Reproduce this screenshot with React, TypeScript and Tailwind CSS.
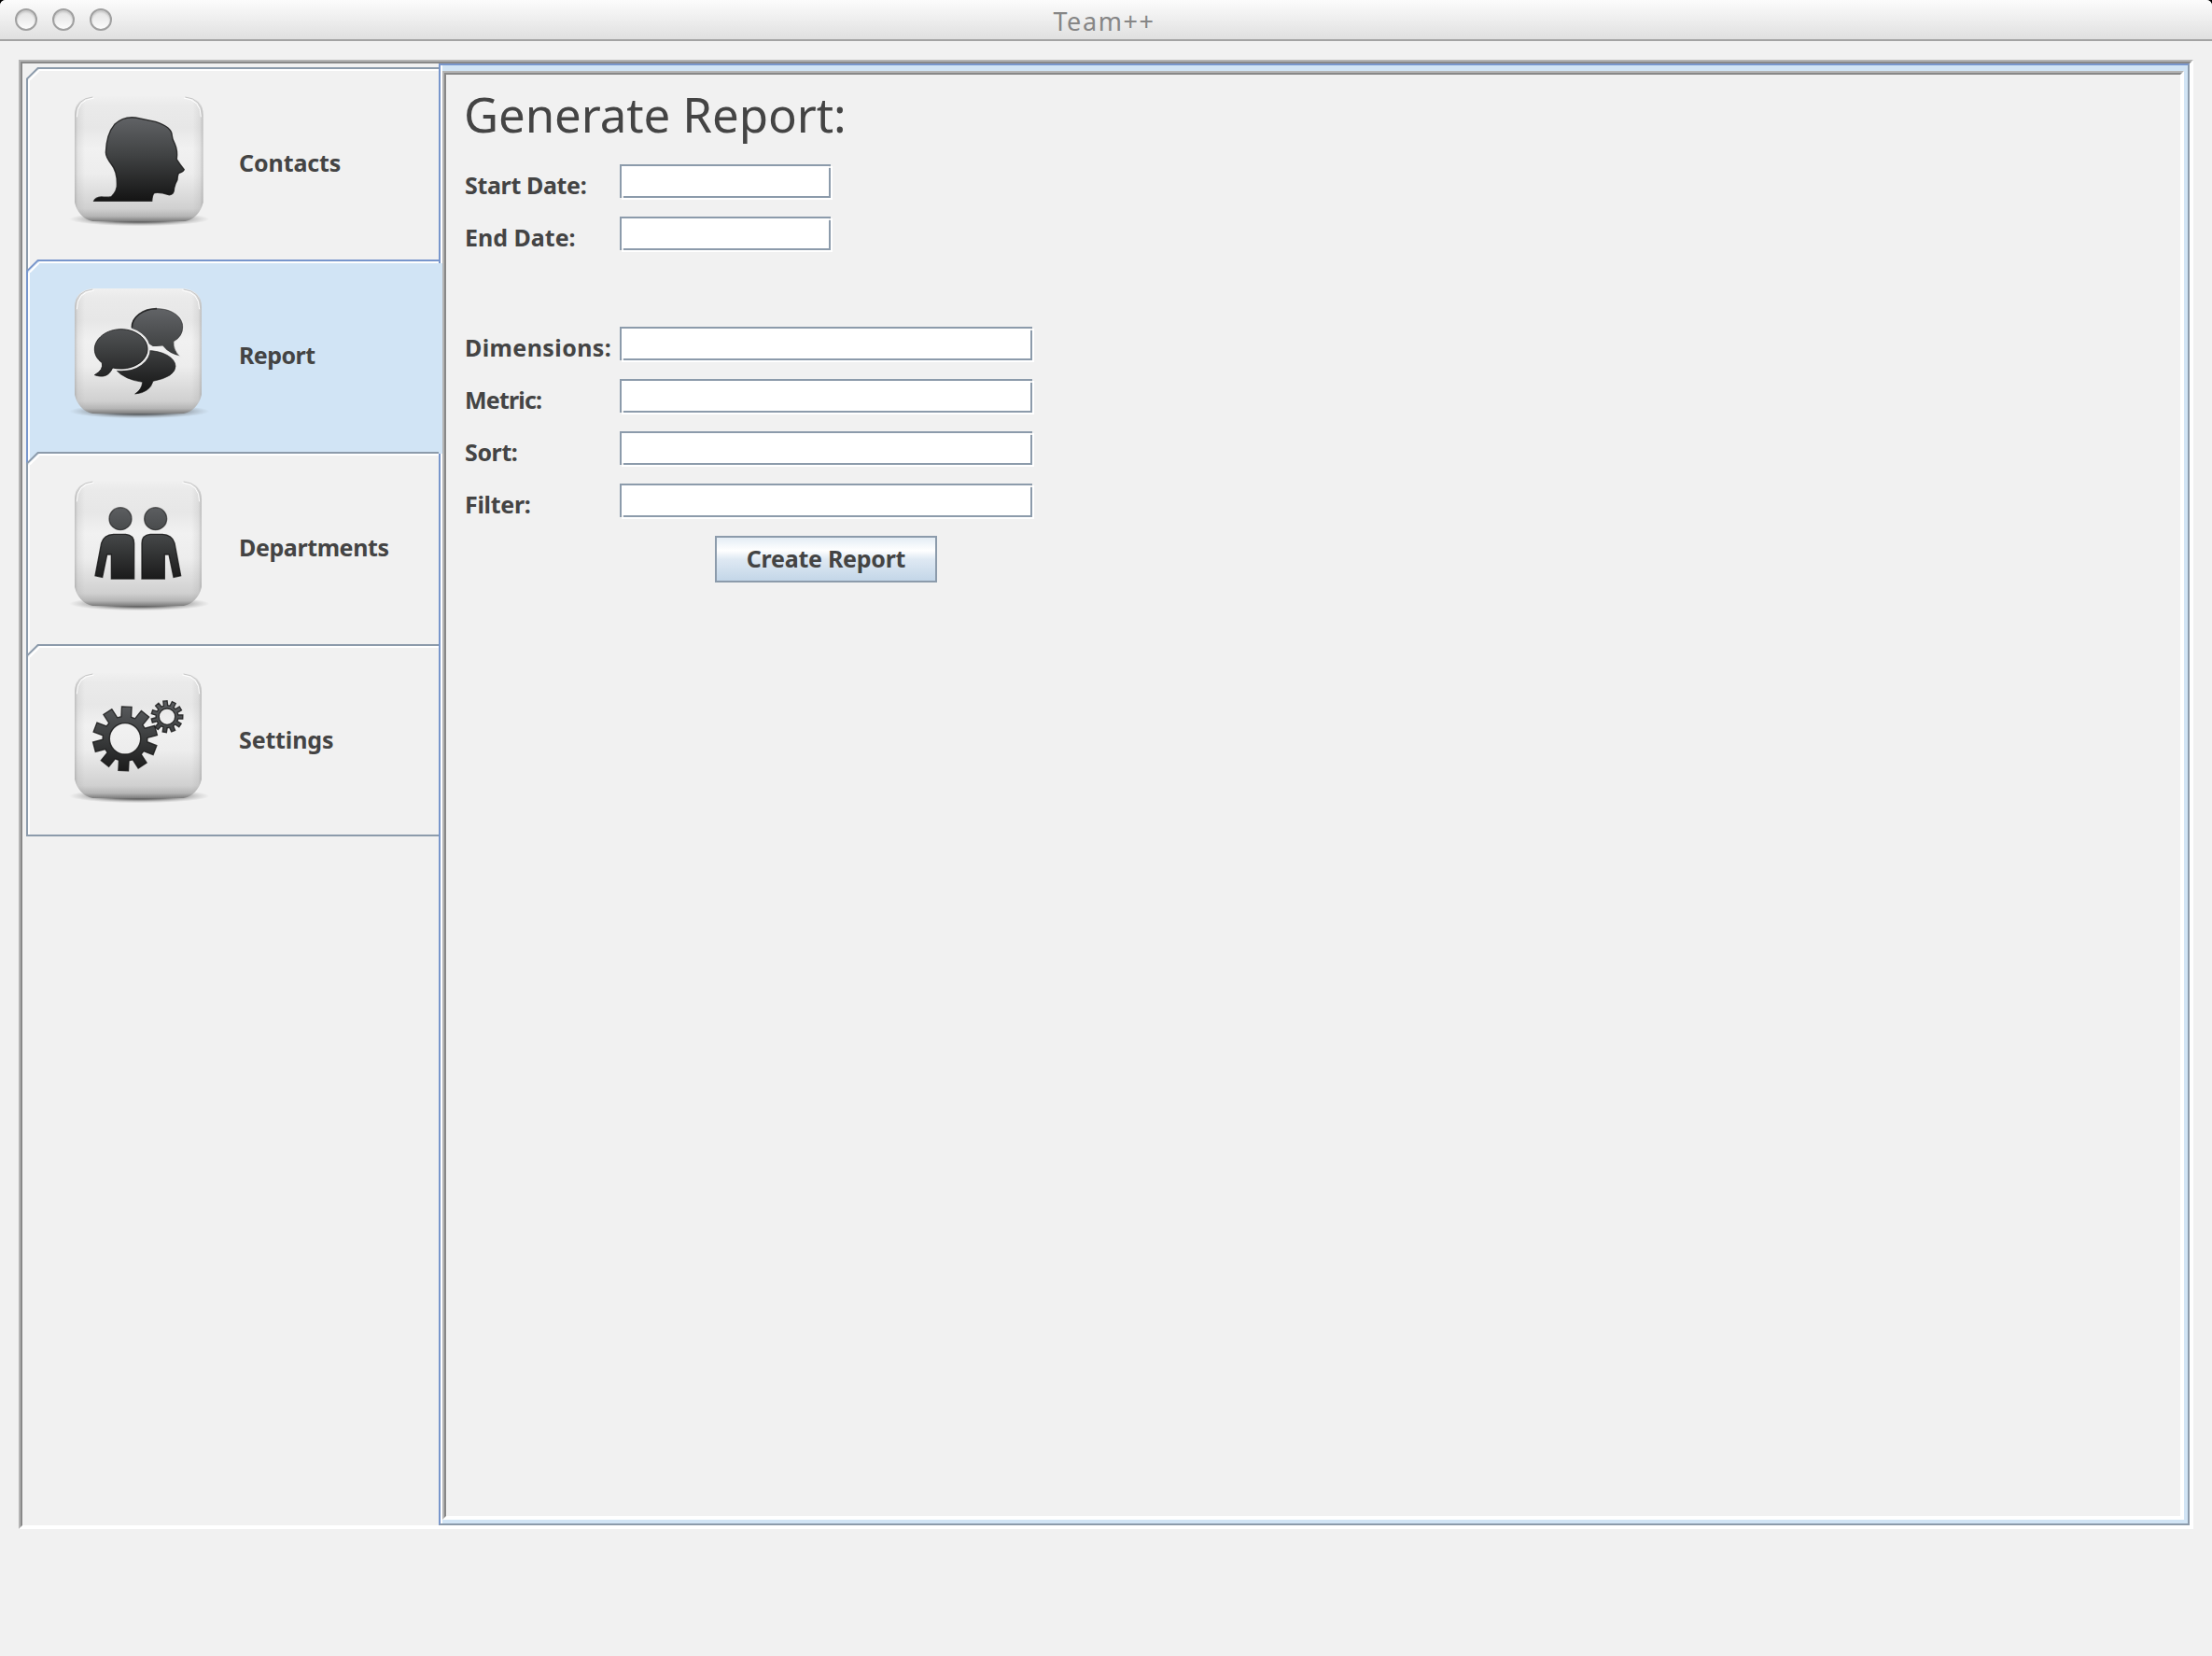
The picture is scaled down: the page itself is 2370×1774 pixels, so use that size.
import type { ReactNode } from "react";

function gearPath(cx: number, cy: number, body: number, outer: number, hole: number, teeth: number, half: number, start: number) {
  const pts: string[] = [];
  for (let i = 0; i < teeth; i++) {
    const a = ((start + (360 / teeth) * i) * Math.PI) / 180;
    const corner = (r: number, side: number) => {
      const along = Math.sqrt(r * r - half * half);
      const x = cx + Math.sin(a) * along + Math.cos(a) * half * side;
      const y = cy - Math.cos(a) * along + Math.sin(a) * half * side;
      return `${x.toFixed(1)} ${y.toFixed(1)}`;
    };
    pts.push(corner(body, -1), corner(outer, -1), corner(outer, 1), corner(body, 1));
  }
  return `M${pts.join("L")}ZM${cx - hole} ${cy}a${hole} ${hole} 0 1 0 ${hole * 2} 0a${hole} ${hole} 0 1 0 ${-hole * 2} 0Z`;
}

/* Glossy button face; shift moves the glyph's own coordinates onto the face. */
function Tile({ wide, shift = 0, children }: { wide?: boolean; shift?: number; children: ReactNode }) {
  const w = wide ? 413 : 408;
  const ink = `ink${shift}`;
  const face = `M300 309H${240 + w - 60}Q${240 + w} 314 ${240 + w} 370V650Q${240 + w - 12} 700 ${240 + w - 58} 711H298Q252 700 240 650V370Q240 314 300 309Z`;
  return (
    <svg viewBox="216 288 468 456" className="h-[152px] w-[156px] shrink-0">
      <defs>
        <linearGradient id="tile" x1="0" y1="0" x2="0" y2="1">
          <stop offset="0" stopColor="#f0f0f0" />
          <stop offset=".08" stopColor="#eaeaea" />
          <stop offset=".25" stopColor="#e7e7e7" />
          <stop offset=".42" stopColor="#f1f1f1" />
          <stop offset=".62" stopColor="#ededed" />
          <stop offset=".9" stopColor="#d0d0d0" />
          <stop offset=".96" stopColor="#b5b5b5" />
          <stop offset="1" stopColor="#7c7c7c" />
        </linearGradient>
        <linearGradient id="edge" x1="0" y1="0" x2="1" y2="0">
          <stop offset="0" stopColor="#888" stopOpacity=".45" />
          <stop offset=".025" stopColor="#999" stopOpacity=".16" />
          <stop offset=".08" stopColor="#999" stopOpacity="0" />
          <stop offset=".92" stopColor="#999" stopOpacity="0" />
          <stop offset=".975" stopColor="#999" stopOpacity=".16" />
          <stop offset="1" stopColor="#888" stopOpacity=".45" />
        </linearGradient>
        <radialGradient id="shade">
          <stop offset="0" stopColor="#222" stopOpacity=".95" />
          <stop offset=".5" stopColor="#444" stopOpacity=".7" />
          <stop offset=".8" stopColor="#666" stopOpacity=".25" />
          <stop offset="1" stopColor="#777" stopOpacity="0" />
        </radialGradient>
        <linearGradient id={ink} gradientUnits="userSpaceOnUse" x1="0" y1={380 - shift} x2="0" y2={640 - shift}>
          <stop offset="0" stopColor="#606265" />
          <stop offset=".45" stopColor="#414344" />
          <stop offset="1" stopColor="#161616" />
        </linearGradient>
      </defs>
      <ellipse cx="448" cy="704" rx="226" ry="23" fill="url(#shade)" />
      <path d={face} fill="url(#tile)" />
      <path d={face} fill="url(#edge)" />
      <path d={`M243 372Q243 317 298 312M${237 + w} 372Q${237 + w} 317 ${182 + w} 312`} fill="none" stroke="#c6c6c6" strokeWidth="3" />
      <path d={`M247 376Q247 321 302 315M${233 + w} 376Q${233 + w} 321 ${178 + w} 315`} fill="none" stroke="#fff" strokeWidth="3" />
      <g fill={`url(#${ink})`} transform={`translate(0 ${shift})`}>
        {children}
      </g>
    </svg>
  );
}

const HeadIcon = () => (
  <Tile wide>
    <path
      stroke="#141414"
      strokeOpacity=".8"
      strokeWidth="4"
      d="M302 646Q306 635 326 633Q346 635 358 632Q378 612 376 590Q376 550 358 528Q340 505 340 490Q342 430 368 400Q396 373 436 378L500 391Q553 408 553 436Q554 448 562 462Q572 485 568 512Q578 528 592 545Q590 552 574 557Q570 566 570 578Q562 592 560 604Q560 628 542 626Q512 616 496 620Q490 624 488 646Z"
    />
  </Tile>
);

const ChatIcon = () => (
  <Tile shift={162}>
    <path d="M380 397a91 50 0 0 1 184 0q0 34 -72 48Q482 482 434 486Q456 472 458 448Q400 440 372 408Z" stroke="#141414" strokeOpacity=".6" strokeWidth="3" />
    <path
      stroke="#ededed"
      strokeWidth="5"
      d="M504 209C556 209 590 238 590 272C590 292 580 308 560 319Q558 345 582 368Q542 360 522 334Q512 336 490 335L420 290V272C420 238 456 209 504 209Z"
    />
    <path d="M504 212C555 212 587 240 587 270C587 290 578 306 558 317Q556 343 576 364" fill="none" stroke="#222" strokeOpacity=".5" strokeWidth="3" />
    <path d="M424 272C424 240 458 212 504 212" fill="none" stroke="#141414" strokeOpacity=".8" strokeWidth="5" />
    <path stroke="#e8e8e8" strokeWidth="8" d="M389 275C440 275 478 305 478 342C478 380 440 408 389 408Q372 408 362 405" />
    <path
      d="M362 402C350 430 330 434 304 425Q334 408 328 386C312 374 304 360 304 342C304 308 342 278 389 278C436 278 474 308 474 342C474 376 436 405 389 405Q374 405 362 402Z"
      stroke="#141414"
      strokeOpacity=".8"
      strokeWidth="3"
    />
  </Tile>
);

const BODY = "M326 335Q334 308 365 307H404Q431 309 431 336V450H358V372H344L329 445L306 440Z";
const PeopleIcon = () => (
  <Tile shift={174}>
    <g stroke="#141414" strokeOpacity=".8" strokeWidth="4">
      <circle cx="387" cy="257" r="36" strokeOpacity=".6" />
      <circle cx="500" cy="257" r="36" strokeOpacity=".6" />
      <path d={BODY} />
      <path d={BODY} transform="matrix(-1 0 0 1 887 0)" />
    </g>
  </Tile>
);

const GearsIcon = () => (
  <Tile shift={186}>
    <g fillRule="evenodd" stroke="#141414" strokeOpacity=".8" strokeWidth="4">
      <path d={gearPath(402, 334, 72, 104, 50, 10, 16, 3)} />
      <path d={gearPath(537, 263, 36, 51, 26, 11, 6.5, -7)} />
    </g>
  </Tile>
);

/* Chamfered top-left corner of a tab, laid over the tab above it. */
function Corner({ line, above, fill, aboveLine, first }: { line: string; above: string; fill: string; aboveLine: string; first?: boolean }) {
  return (
    <svg viewBox="0 0 14 14" className="absolute top-0 left-0 size-3.5">
      <rect width="14" height="14" fill={above} />
      {!first && <rect width="2" height="12" fill={aboveLine} />}
      {!first && <rect x="2" width="2" height="10" fill="#fff" />}
      <path d="M14 1L2 13V14H14Z" fill={fill} />
      <path d="M14 3.4L3.4 14" stroke="#fff" strokeWidth="2" fill="none" />
      <path d="M14 1H12.6L1 12.4V14" stroke={line} strokeWidth="2" fill="none" />
    </svg>
  );
}

const tabs = [
  { label: "Contacts", Icon: HeadIcon, spacing: "tracking-[-0.1px]" },
  { label: "Report", Icon: ChatIcon, spacing: "tracking-[-0.55px]" },
  { label: "Departments", Icon: PeopleIcon, spacing: "tracking-[-0.4px]" },
  { label: "Settings", Icon: GearsIcon, spacing: "tracking-[-0.15px]" },
];

function TabItem({ index }: { index: number }) {
  const { label, Icon, spacing } = tabs[index];
  const active = index === 1;
  const last = index === tabs.length - 1;
  return (
    <div
      className={`relative flex h-[206px] border-t-2 border-l-2 ${active ? "z-10 border-[#7896cc] bg-[#d1e4f5]" : "border-[#8c9bab] bg-[#f1f1f1]"} ${last ? "border-b-2" : ""}`}
    >
      <div className="flex grow border-t-2 border-l-2 border-white pt-5 pl-10">
        <Icon />
        <span className={`ml-7 pt-[60px] leading-[36px] font-bold whitespace-nowrap ${spacing}`}>{label}</span>
      </div>
      <div className="absolute -top-0.5 -left-0.5 size-3.5">
        <Corner
          line={active ? "#7896cc" : "#8c9bab"}
          fill={active ? "#d1e4f5" : "#f1f1f1"}
          above={index === 2 ? "#d1e4f5" : "#f1f1f1"}
          aboveLine={index === 2 ? "#7896cc" : "#8c9bab"}
          first={index === 0}
        />
      </div>
      {active && <div className="absolute top-0.5 -right-1 -bottom-0.5 w-1 bg-[#d1e4f5]" />}
    </div>
  );
}

function Field({ label, wide, spacing }: { label: string; wide?: boolean; spacing: string }) {
  return (
    <label className="flex h-14 items-start">
      <span className={`w-[166px] shrink-0 pt-1 leading-[36px] font-bold whitespace-nowrap ${spacing}`}>{label}</span>
      <span className={`relative flex h-9 border-2 border-[#8c9bab] bg-white shadow-[2px_2px_0_#fff] ${wide ? "w-[442px]" : "w-[226px]"}`}>
        <input className="w-full bg-white px-1 outline-none" />
        <i className="absolute top-0 -right-0.5 size-0.5 bg-[#f1f1f1]" />
        <i className="absolute -bottom-0.5 left-0 size-0.5 bg-[#f1f1f1]" />
      </span>
    </label>
  );
}

export default function App() {
  return (
    <div className="h-[1774px] w-[2370px] bg-black font-['Noto_Sans',sans-serif] text-[25px] text-[#444]">
      <div className="flex h-full flex-col overflow-hidden rounded-t-[6px] bg-[#f1f1f1]">
        <header className="relative flex h-11 shrink-0 items-center justify-center border-b-2 border-[#a3a3a3] bg-linear-to-b from-[#fcfcfc] to-[#e0e0e0] text-[#868686]">
          <div className="absolute left-4 flex gap-4">
            {[0, 1, 2].map((n) => (
              <i key={n} className="size-6 rounded-full border-2 border-[#a0a0a0] bg-linear-to-b from-[#e4e4e4] via-[#eee] to-[#fcfcfc] shadow-[inset_0_2px_2px_#c8c8c8]" />
            ))}
          </div>
          <span className="pt-[3px] pr-1 text-[27px] leading-[39px] tracking-[1.6px]">Team++</span>
        </header>

        <main className="mx-5 mt-5 flex h-[1574px] shrink-0 border-2 border-t-[#b4b4b4] border-r-white border-b-white border-l-[#b4b4b4]">
          <div className="flex grow border-2 border-t-[#888] border-r-white border-b-white border-l-[#888]">
            <nav className="w-[446px] shrink-0 pt-1 pl-1">
              {tabs.map((t, i) => (
                <TabItem key={t.label} index={i} />
              ))}
            </nav>
            <section className="flex grow border-2 border-t-[#7896cc] border-r-[#8c9bab] border-b-[#8c9bab] border-l-[#7896cc]">
              <div className="flex grow border-l-2 border-white">
                <div className="flex grow border-t-[6px] border-r-4 border-b-4 border-[#d1e4f5]">
                  <div className="flex grow border-2 border-t-[#b4b4b4] border-r-white border-b-white border-l-[#b4b4b4]">
                    <div className="grow border-2 border-t-[#888] border-r-white border-b-white border-l-[#888] pl-5">
                      <h1 className="-ml-px h-24 pt-[7px] text-[51px] leading-[70px] tracking-[-0.1px]">Generate Report:</h1>
                      <Field label="Start Date:" spacing="tracking-[-0.35px]" />
                      <Field label="End Date:" spacing="tracking-[0px]" />
                      <div className="mt-[62px]">
                        <Field wide label="Dimensions:" spacing="tracking-[0.4px]" />
                        <Field wide label="Metric:" spacing="tracking-[-0.8px]" />
                        <Field wide label="Sort:" spacing="tracking-[-0.4px]" />
                        <Field wide label="Filter:" spacing="tracking-[-0.3px]" />
                      </div>
                      <button className="ml-[268px] flex h-[50px] w-[238px] items-center justify-center border-2 border-[#8c9bab] bg-[linear-gradient(#e4edf5,#fff_30%,#dfe9f3_50%,#c3d6e8)] pb-0.5 leading-9 font-bold tracking-[-0.25px]">
                        Create Report
                      </button>
                    </div>
                  </div>
                </div>
              </div>
            </section>
          </div>
        </main>
      </div>
    </div>
  );
}
